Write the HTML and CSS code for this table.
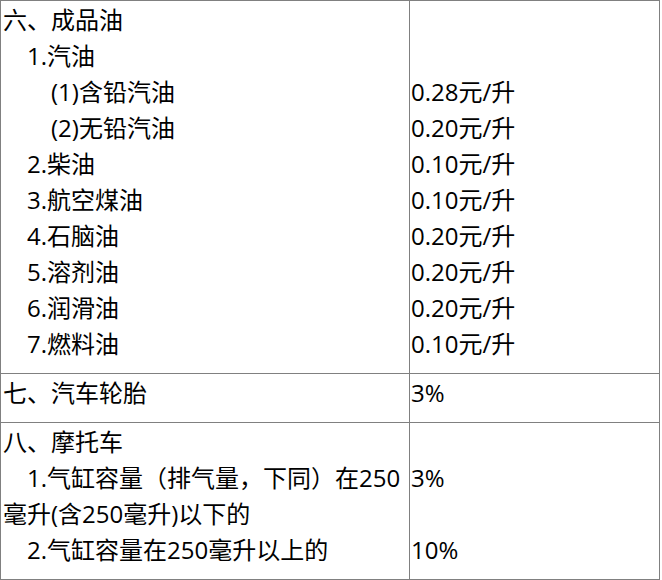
FILE: index.html
```html
<!DOCTYPE html>
<html lang="zh-CN">
<head>
<meta charset="utf-8">
<link rel="stylesheet" href="styles.css">
</head>
<body>
<table class="tax">
  <tr>
    <td class="name">
      <div class="ln">六、成品油</div>
      <div class="ln i1">1.汽油</div>
      <div class="ln i2">(1)含铅汽油</div>
      <div class="ln i2">(2)无铅汽油</div>
      <div class="ln i1">2.柴油</div>
      <div class="ln i1">3.航空煤油</div>
      <div class="ln i1">4.石脑油</div>
      <div class="ln i1">5.溶剂油</div>
      <div class="ln i1">6.润滑油</div>
      <div class="ln i1">7.燃料油</div>
    </td>
    <td class="rate">
      <div class="ln">&nbsp;</div>
      <div class="ln">&nbsp;</div>
      <div class="ln">0.28元/升</div>
      <div class="ln">0.20元/升</div>
      <div class="ln">0.10元/升</div>
      <div class="ln">0.10元/升</div>
      <div class="ln">0.20元/升</div>
      <div class="ln">0.20元/升</div>
      <div class="ln">0.20元/升</div>
      <div class="ln">0.10元/升</div>
    </td>
  </tr>
  <tr>
    <td class="name"><div class="ln">七、汽车轮胎</div></td>
    <td class="rate"><div class="ln">3%</div></td>
  </tr>
  <tr>
    <td class="name">
      <div class="ln">八、摩托车</div>
      <div class="ln i1">1.气缸容量（排气量，下同）在250毫升(含250毫升)以下的</div>
      <div class="ln i1">2.气缸容量在250毫升以上的</div>
    </td>
    <td class="rate">
      <div class="ln">&nbsp;</div>
      <div class="ln">3%</div>
      <div class="ln">&nbsp;</div>
      <div class="ln">10%</div>
    </td>
  </tr>
</table>
</body>
</html>
```

FILE: styles.css
```css
html, body {
  margin: 0;
  padding: 0;
  background: #ffffff;
}

.tax {
  border-collapse: collapse;
  width: 660px;
  table-layout: fixed;
  font-family: "Open Sans", "Noto Sans CJK SC", sans-serif;
  font-size: 24px;
  color: #000000;
}

.tax td {
  border: 1px solid #808080;
  vertical-align: top;
  padding: 1px 0 11px 0;
}

.tax td.name {
  width: 406px;
  padding-left: 2px;
}

.tax td.rate {
  padding-left: 1px;
}

.ln {
  line-height: 36px;
  white-space: normal;
}

.i1 {
  text-indent: 1em;
}

.i2 {
  text-indent: 2em;
}
```
